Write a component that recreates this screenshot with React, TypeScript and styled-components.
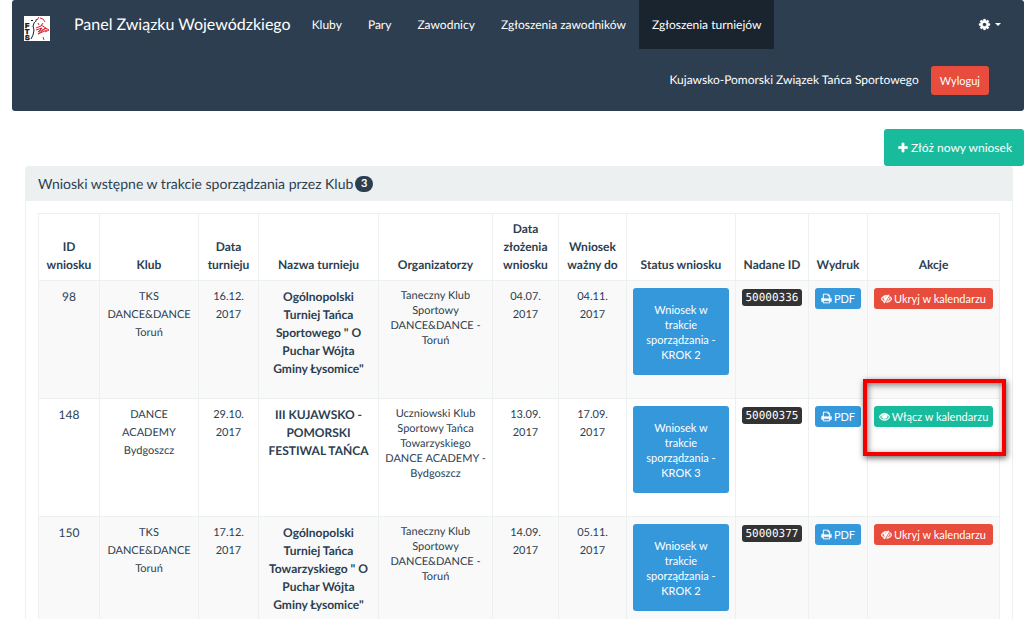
import React from "react";
import styled, { createGlobalStyle, css } from "styled-components";

const GlobalStyle = createGlobalStyle`
  * { box-sizing: border-box; }
  body {
    margin: 0;
    background: #fff;
    color: #2c3e50;
    font-family: Lato, "Liberation Sans", sans-serif;
    font-size: 12px;
    line-height: 18px;
    text-rendering: geometricPrecision;
    overflow-x: hidden;
  }
`;

const ICONS = {
  cog: "M1152 896q0-106-75-181t-181-75-181 75-75 181 75 181 181 75 181-75 75-181zm512-109v222q0 12-8 23t-20 13l-185 28q-19 54-39 91 35 50 107 138 10 12 10 25t-9 23q-27 37-99 108t-94 71q-12 0-26-9l-138-108q-44 23-91 38-16 136-29 186-7 28-36 28h-222q-14 0-24.5-8.5t-11.5-21.5l-28-184q-49-16-90-37l-141 107q-10 9-25 9-14 0-25-11-126-114-165-168-7-10-7-23 0-12 8-23 15-21 51-66.5t54-70.5q-27-50-41-99l-183-27q-13-2-21-12.5t-8-23.5v-222q0-12 8-23t19-13l186-28q14-46 39-92-40-57-107-138-10-12-10-24 0-10 9-23 26-36 98.5-107.5t94.5-71.5q13 0 26 10l138 107q44-23 91-38 16-136 29-186 7-28 36-28h222q14 0 24.5 8.5t11.5 21.5l28 184q49 16 90 37l142-107q9-9 24-9 13 0 25 10 129 119 165 170 7 8 7 22 0 12-8 23-15 21-51 66.5t-54 70.5q26 50 41 98l183 28q13 2 21 12.5t8 23.5z",
  plus: "M1600 736v192q0 40-28 68t-68 28h-416v416q0 40-28 68t-68 28h-192q-40 0-68-28t-28-68v-416h-416q-40 0-68-28t-28-68v-192q0-40 28-68t68-28h416v-416q0-40 28-68t68-28h192q40 0 68 28t28 68v416h416q40 0 68 28t28 68z",
  print:
    "M448 1536h896v-256h-896v256zm0-640h896v-384h-160q-40 0-68-28t-28-68v-160h-640v640zm1152 64q0-26-19-45t-45-19-45 19-19 45 19 45 45 19 45-19 19-45zm128 0v416q0 13-9.5 22.5t-22.5 9.5h-224v160q0 40-28 68t-68 28h-960q-40 0-68-28t-28-68v-160h-224q-13 0-22.5-9.5t-9.5-22.5v-416q0-79 56.5-135.5t135.5-56.5h64v-544q0-40 28-68t68-28h672q40 0 88 20t76 48l152 152q28 28 48 76t20 88v256h64q79 0 135.5 56.5t56.5 135.5z",
  eye: "M1664 960q-152-236-381-353 61 104 61 225 0 185-131.5 316.5t-316.5 131.5-316.5-131.5-131.5-316.5q0-121 61-225-229 117-381 353 133 205 333.5 326.5t434.5 121.5 434.5-121.5 333.5-326.5zm-720-384q0-20-14-34t-34-14q-125 0-214.5 89.5t-89.5 214.5q0 20 14 34t34 14 34-14 14-34q0-86 61-147t147-61q20 0 34-14t14-34zm848 384q0 34-20 69-140 230-376.5 368.5t-499.5 138.5-499.5-139-376.5-368q-20-35-20-69t20-69q140-229 376.5-368t499.5-139 499.5 139 376.5 368q20 35 20 69z",
  eyeSlash:
    "M555 1335l78-141q-87-63-136-159t-49-203q0-121 61-225-229 117-381 353 167 258 427 375zm389-759q0-20-14-34t-34-14q-125 0-214.5 89.5t-89.5 214.5q0 20 14 34t34 14 34-14 14-34q0-86 61-147t147-61q20 0 34-14t14-34zm363-191q0 7-1 9-106 189-316 567t-315 566l-49 89q-10 16-28 16-12 0-134-70-16-10-16-28 0-12 44-87-143-65-263.5-173t-208.5-245q-20-31-20-69t20-69q153-235 380-371t496-136q89 0 180 17l54-97q10-16 28-16 5 0 18 6t31 15.5 33 18.5 31.5 18.5 19.5 11.5q16 10 16 27zm37 447q0 139-79 253.5t-209 164.5l280-502q8 45 8 84zm448 128q0 35-20 69-39 64-109 145-150 172-347.5 267t-419.5 95l74-132q212-18 392.5-137t301.5-307q-115-179-282-294l63-112q95 64 182.5 153t144.5 184q20 34 20 69z",
};

const IconSvg = styled.svg<{ $stroke: number }>`
  flex: none;
  fill: currentColor;
  stroke: currentColor;
  stroke-width: ${(p) => p.$stroke};
`;

function Icon({ name, size = 12 }: { name: keyof typeof ICONS; size?: number }) {
  const heavy = name === "eye" || name === "eyeSlash";
  return (
    <IconSvg
      $stroke={heavy ? 90 : 30}
      width={size}
      height={size}
      viewBox="0 0 1792 1792"
      aria-hidden="true"
    >
      <path d={ICONS[name]} />
    </IconSvg>
  );
}

const Page = styled.div`
  padding-left: 12px;
`;

const Navbar = styled.nav`
  background: #2c3e50;
  border-radius: 3px;
  color: #fff;
  height: 111px;
`;

const NavRow = styled.div`
  display: flex;
  align-items: center;
  height: 49px;
  padding-left: 12px;
`;

const LogoLink = styled.a`
  display: flex;
  margin: 7px 24px 0 0;
`;

const Brand = styled.a`
  color: #fff;
  font-size: 16px;
  text-decoration: none;
  margin-right: 8px;
  white-space: nowrap;
`;

const NavLink = styled.a<{ $active?: boolean }>`
  display: flex;
  align-items: center;
  align-self: stretch;
  padding: 0 13px;
  color: #fff;
  text-decoration: none;
  white-space: nowrap;
  ${(p) => p.$active && css`background: #1a242f;`}
`;

const SettingsButton = styled.button`
  display: flex;
  align-items: center;
  gap: 4px;
  margin-left: auto;
  margin-right: 23px;
  padding: 0;
  border: 0;
  background: none;
  color: #fff;
`;

const Caret = styled.span`
  border-top: 3px solid currentColor;
  border-left: 3px solid transparent;
  border-right: 3px solid transparent;
`;

const UserRow = styled.div`
  display: flex;
  justify-content: flex-end;
  align-items: center;
  height: 62px;
  padding-right: 35px;
  gap: 12px;
`;

const tones = { red: "#e74c3c", green: "#18bc9c", blue: "#3498db" };

const Button = styled.button<{ $tone: keyof typeof tones; $size?: "xs" | "sm" | "md" }>`
  display: inline-flex;
  align-items: center;
  justify-content: center;
  gap: 2px;
  border: 0;
  border-radius: 3px;
  background: ${(p) => tones[p.$tone]};
  color: #fff;
  font-family: inherit;
  white-space: nowrap;
  ${(p) => {
    if (p.$size === "md") return css`font-size: 12px; height: 37px; padding: 0 12px 0 13px;`;
    if (p.$size === "sm") return css`font-size: 11px; height: 29px; padding: 0 9px;`;
    return css`font-size: 11px; height: 21px; padding: 0; width: 100%;`;
  }}
`;

const Toolbar = styled.div`
  display: flex;
  justify-content: flex-end;
  padding-top: 18px;
`;

const Panel = styled.section`
  margin: 0 11px 0 13px;
  border: 1px solid #ecf0f1;
  border-radius: 3px;
`;

const PanelHeading = styled.h1`
  display: flex;
  align-items: center;
  gap: 2px;
  height: 34px;
  margin: 0;
  padding: 0 12px 1px;
  background: #ecf0f1;
  font-size: 14px;
  font-weight: 400;
`;

const Badge = styled.span`
  display: inline-flex;
  align-items: center;
  justify-content: center;
  height: 16px;
  min-width: 18px;
  border-radius: 8px;
  background: #2c3e50;
  color: #fff;
  font-size: 11px;
  font-weight: 700;
`;

const PanelBody = styled.div`
  padding: 12px;
`;

const Table = styled.table`
  width: 100%;
  table-layout: fixed;
  border-collapse: collapse;
  text-align: center;

  th,
  td {
    border: 1px solid #ecf0f1;
    padding: 7px 6px;
  }

  th {
    padding: 6px;
  }
`;

const HeadCell = styled.th`
  height: 67px;
  vertical-align: bottom;
  font-weight: 700;
`;

const Row = styled.tr`
  height: 118px;
  &:nth-child(odd) {
    background: #f9f9f9;
  }
`;

const Cell = styled.td<{ $kind?: "small" | "dense" | "bold" }>`
  position: relative;
  vertical-align: top;
  white-space: pre-line;
  ${(p) => p.$kind === "small" && css`font-size: 11px;`}
  ${(p) => p.$kind === "dense" && css`font-size: 11px; line-height: 15px;`}
  ${(p) => p.$kind === "bold" && css`font-weight: 700;`}
`;

const Status = styled.button`
  width: 100%;
  height: 87px;
  padding: 0 12px;
  border: 0;
  border-radius: 3px;
  background: #3498db;
  color: #fff;
  font-family: inherit;
  font-size: 11px;
  line-height: 15px;
  white-space: pre-line;
`;

const Code = styled.code`
  display: block;
  height: 17px;
  margin: 1px 0;
  border-radius: 3px;
  background: #333;
  color: #fff;
  font-family: "DejaVu Sans Mono", monospace;
  font-size: 11px;
  line-height: 17px;
`;

const Highlight = styled.div`
  position: absolute;
  inset: -20px -7px auto -5px;
  height: 77px;
  border: 4px solid #f40000;
  box-shadow: 1px 2px 6px rgba(0, 0, 0, 0.6), inset 1px 2px 6px rgba(0, 0, 0, 0.5);
  pointer-events: none;
`;

function Logo() {
  return (
    <svg width="26" height="25" viewBox="0 0 26 25" role="img" aria-label="FTS">
      <rect width="26" height="25" fill="#fff" />
      <g fill="#111" stroke="#111" strokeWidth="0.5" fontFamily="Liberation Sans, sans-serif" fontWeight="700" fontSize="7">
        <text x="1" y="12">F</text>
        <text x="1" y="18">T</text>
        <text x="1" y="24">S</text>
      </g>
      <path d="M7 4.500h2M10.500 6l-1.500 4 1 4-1 5-2 4M12.500 3l-1 3" fill="none" stroke="#222" />
      <path
        d="M13 4l2-3M16 2l3 1 2 3M12 12l5-2 2-3M12 14l6-2-4 4 8-4-8 6 9-4M17 9l8 5-4 2"
        fill="none"
        stroke="#d9252f"
      />
      <path d="M14 7l1 2M19 21l1 3" fill="none" stroke="#8a4a50" />
    </svg>
  );
}

const columns = [
  { label: "ID wniosku", width: 61 },
  { label: "Klub", width: 99 },
  { label: "Data turnieju", width: 60 },
  { label: "Nazwa turnieju", width: 120 },
  { label: "Organizatorzy", width: 114 },
  { label: "Data złożenia wniosku", width: 66 },
  { label: "Wniosek ważny do", width: 68 },
  { label: "Status wniosku", width: 109 },
  { label: "Nadane ID", width: 73 },
  { label: "Wydruk", width: 59 },
  { label: "Akcje", width: 132 },
];

const rows = [
  {
    id: 98,
    club: "TKS DANCE&DANCE\nToruń",
    date: "16.12.\n2017",
    name: 'Ogólnopolski Turniej Tańca Sportowego " O Puchar Wójta Gminy Łysomice"',
    organizer: "Taneczny Klub Sportowy DANCE&DANCE - Toruń",
    submitted: "04.07.\n2017",
    valid: "04.11.\n2017",
    step: 2,
    code: "50000336",
    visible: true,
  },
  {
    id: 148,
    club: "DANCE ACADEMY\nBydgoszcz",
    date: "29.10.\n2017",
    name: "III KUJAWSKO - POMORSKI FESTIWAL TAŃCA",
    organizer: "Uczniowski Klub Sportowy Tańca Towarzyskiego DANCE ACADEMY - Bydgoszcz",
    submitted: "13.09.\n2017",
    valid: "17.09.\n2017",
    step: 3,
    code: "50000375",
    visible: false,
  },
  {
    id: 150,
    club: "TKS DANCE&DANCE\nToruń",
    date: "17.12.\n2017",
    name: 'Ogólnopolski Turniej Tańca Towarzyskiego " O Puchar Wójta Gminy Łysomice"',
    organizer: "Taneczny Klub Sportowy DANCE&DANCE - Toruń",
    submitted: "14.09.\n2017",
    valid: "05.11.\n2017",
    step: 2,
    code: "50000377",
    visible: true,
  },
];

export default function App() {
  return (
    <Page>
      <GlobalStyle />
      <Navbar>
        <NavRow>
          <LogoLink href="#"><Logo /></LogoLink>
          <Brand href="#">Panel Związku Wojewódzkiego</Brand>
          <NavLink href="#">Kluby</NavLink>
          <NavLink href="#">Pary</NavLink>
          <NavLink href="#">Zawodnicy</NavLink>
          <NavLink href="#">Zgłoszenia zawodników</NavLink>
          <NavLink href="#" $active>Zgłoszenia turniejów</NavLink>
          <SettingsButton aria-label="Ustawienia">
            <Icon name="cog" size={13} />
            <Caret />
          </SettingsButton>
        </NavRow>
        <UserRow>
          <span>Kujawsko-Pomorski Związek Tańca Sportowego</span>
          <Button $tone="red" $size="sm">Wyloguj</Button>
        </UserRow>
      </Navbar>
      <Toolbar>
        <Button $tone="green" $size="md"><Icon name="plus" />Złóż nowy wniosek</Button>
      </Toolbar>
      <Panel>
        <PanelHeading>
          Wnioski wstępne w trakcie sporządzania przez Klub
          <Badge>3</Badge>
        </PanelHeading>
        <PanelBody>
          <Table>
            <colgroup>
              {columns.map((c) => <col key={c.label} width={c.width} />)}
            </colgroup>
            <thead>
              <tr>
                {columns.map((c) => <HeadCell key={c.label} scope="col">{c.label}</HeadCell>)}
              </tr>
            </thead>
            <tbody>
              {rows.map((r) => (
                <Row key={r.id}>
                  <Cell>{r.id}</Cell>
                  <Cell $kind="small">{r.club}</Cell>
                  <Cell $kind="small">{r.date}</Cell>
                  <Cell $kind="bold">{r.name}</Cell>
                  <Cell $kind="dense">{r.organizer}</Cell>
                  <Cell $kind="small">{r.submitted}</Cell>
                  <Cell $kind="small">{r.valid}</Cell>
                  <Cell>
                    <Status>{`Wniosek w\ntrakcie\nsporządzania -\nKROK ${r.step}`}</Status>
                  </Cell>
                  <Cell><Code>{r.code}</Code></Cell>
                  <Cell><Button $tone="blue"><Icon name="print" size={11} />PDF</Button></Cell>
                  <Cell>
                    {r.visible ? (
                      <Button $tone="red"><Icon name="eyeSlash" size={11} />Ukryj w kalendarzu</Button>
                    ) : (
                      <>
                        <Button $tone="green"><Icon name="eye" size={11} />Włącz w kalendarzu</Button>
                        <Highlight />
                      </>
                    )}
                  </Cell>
                </Row>
              ))}
            </tbody>
          </Table>
        </PanelBody>
      </Panel>
    </Page>
  );
}
